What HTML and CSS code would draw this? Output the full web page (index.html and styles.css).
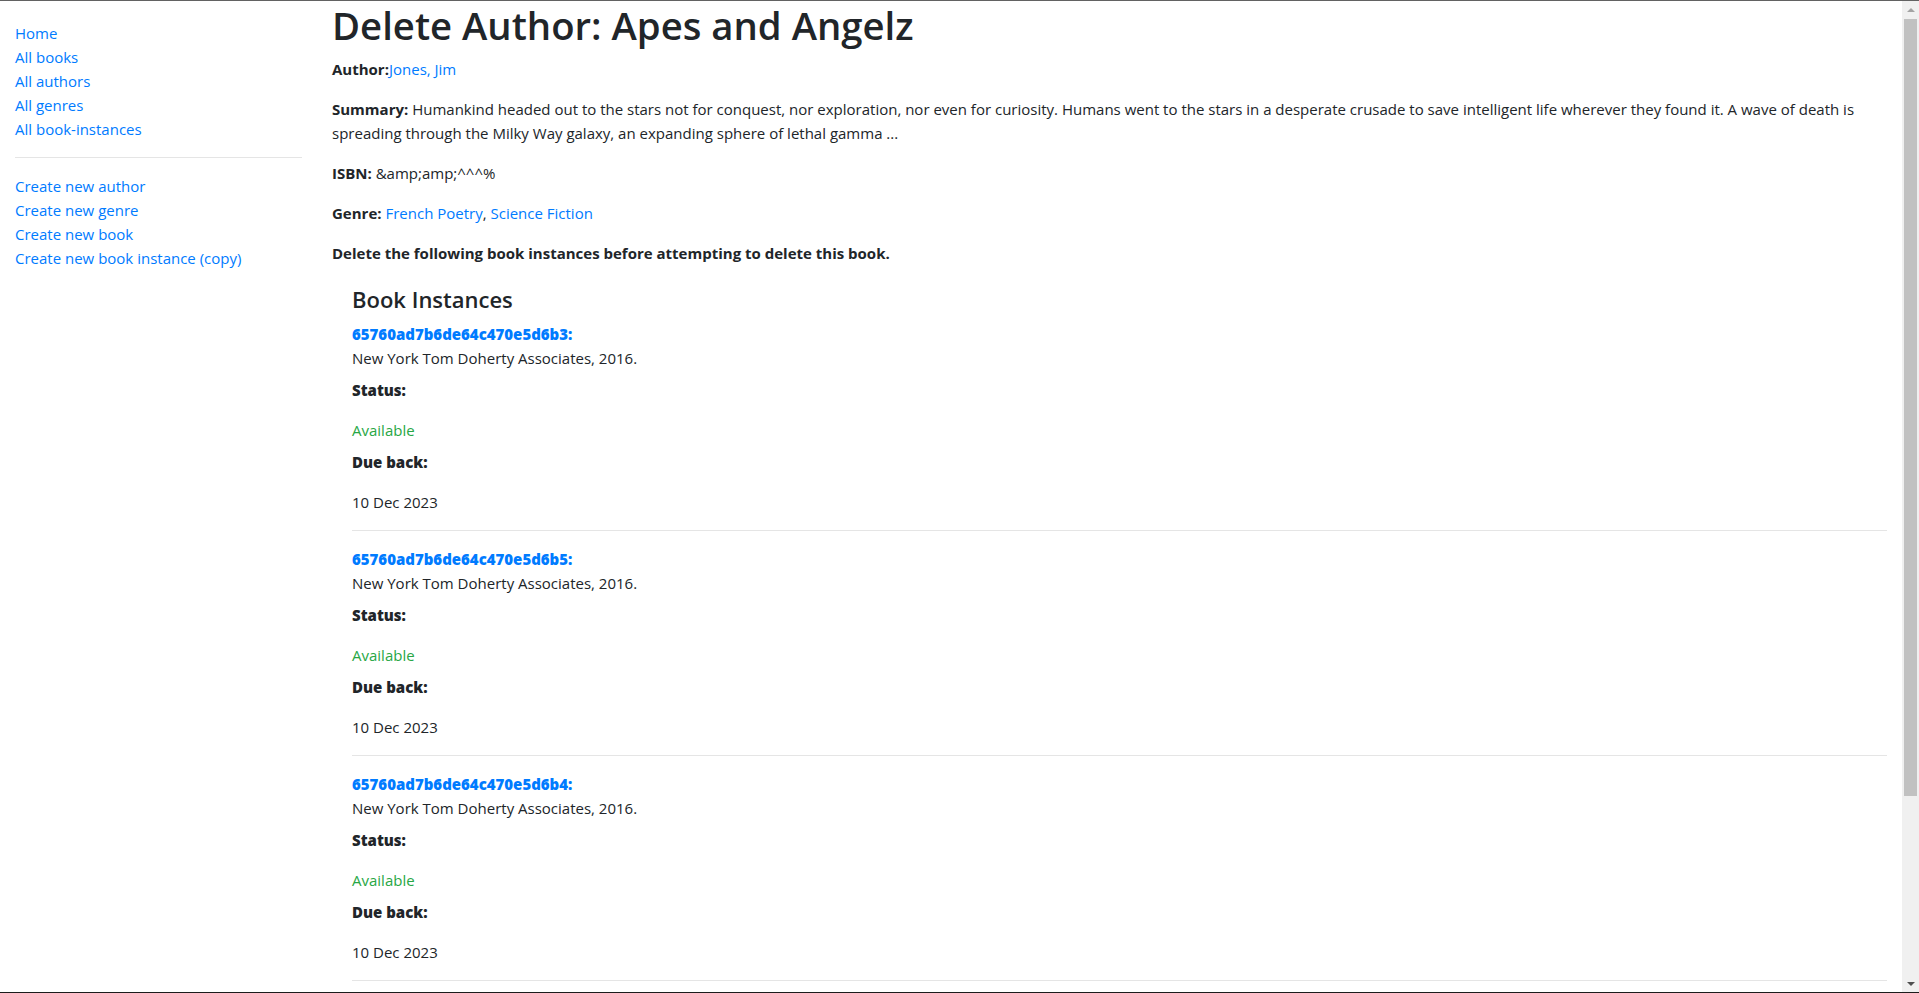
FILE: index.html
```html
<!DOCTYPE html>
<html lang="en">
<head>
<meta charset="utf-8">
<title>Delete Author</title>
<link rel="stylesheet" href="styles.css">
</head>
<body>
<div class="frame">
  <div class="viewport">
    <div class="page">
      <div class="row">
        <aside class="col-side">
          <ul class="sidebar-nav">
            <li><a href="#">Home</a></li>
            <li><a href="#">All books</a></li>
            <li><a href="#">All authors</a></li>
            <li><a href="#">All genres</a></li>
            <li><a href="#">All book-instances</a></li>
            <li><hr class="rule"></li>
            <li><a href="#">Create new author</a></li>
            <li><a href="#">Create new genre</a></li>
            <li><a href="#">Create new book</a></li>
            <li><a href="#">Create new book instance (copy)</a></li>
          </ul>
        </aside>
        <main class="col-main">
          <h1 class="title">Delete Author: Apes and Angelz</h1>
          <p class="para"><strong class="lbl">Author:</strong><a href="#">Jones, Jim</a></p>
          <p class="para"><strong class="lbl">Summary:</strong> Humankind headed out to the stars not for conquest, nor exploration, nor even for curiosity. Humans went to the stars in a desperate crusade to save intelligent life wherever they found it. A wave of death is spreading through the Milky Way galaxy, an expanding sphere of lethal gamma ...</p>
          <p class="para"><strong class="lbl">ISBN:</strong> &amp;amp;amp;^^^%</p>
          <p class="para"><strong class="lbl">Genre:</strong> <a href="#">French Poetry</a>, <a href="#">Science Fiction</a></p>
          <p class="para"><strong class="lbl">Delete the following book instances before attempting to delete this book.</strong></p>

          <section class="instances">
            <h4 class="subtitle">Book Instances</h4>

            <div class="instance">
              <a class="inst-id" href="#">65760ad7b6de64c470e5d6b3:</a>
              <div class="imprint">New York Tom Doherty Associates, 2016.</div>
              <p class="field-label">Status:</p>
              <p class="status">Available</p>
              <p class="field-label">Due back:</p>
              <p class="due">10 Dec 2023</p>
            </div>
            <hr class="rule">

            <div class="instance">
              <a class="inst-id" href="#">65760ad7b6de64c470e5d6b5:</a>
              <div class="imprint">New York Tom Doherty Associates, 2016.</div>
              <p class="field-label">Status:</p>
              <p class="status">Available</p>
              <p class="field-label">Due back:</p>
              <p class="due">10 Dec 2023</p>
            </div>
            <hr class="rule">

            <div class="instance">
              <a class="inst-id" href="#">65760ad7b6de64c470e5d6b4:</a>
              <div class="imprint">New York Tom Doherty Associates, 2016.</div>
              <p class="field-label">Status:</p>
              <p class="status">Available</p>
              <p class="field-label">Due back:</p>
              <p class="due">10 Dec 2023</p>
            </div>
            <hr class="rule">
          </section>
        </main>
      </div>
    </div>
    <div class="scrollbar" aria-hidden="true">
      <div class="sb-btn"><span class="arrow-up"></span></div>
      <div class="sb-track"><div class="sb-thumb"></div></div>
      <div class="sb-btn"><span class="arrow-down"></span></div>
    </div>
  </div>
</div>
</body>
</html>
```
FILE: styles.css
```css
* { box-sizing: border-box; }

html, body {
  margin: 0;
  height: 100%;
  overflow: hidden;
}

body {
  font-family: "Open Sans", "Noto Sans", sans-serif;
  font-size: 15px;
  line-height: 24px;
  color: #212529;
  background: #fff;
}

a {
  color: #007bff;
  text-decoration: none;
}

.frame {
  height: 100%;
  display: flex;
  flex-direction: column;
  border-top: 1px solid #626262;
  border-bottom: 1px solid #1c1c1c;
}

.viewport {
  flex: 1;
  min-height: 0;
  display: flex;
}

.page {
  flex: 1;
  min-width: 0;
  overflow: hidden;
  padding: 0 15px;
}

.row {
  display: flex;
  margin: 0 -15px;
}

.col-side {
  flex: 0 0 16.6667%;
  max-width: 16.6667%;
  padding: 0 15px;
}

.col-main {
  flex: 0 0 83.3333%;
  max-width: 83.3333%;
  padding: 0 15px;
}

.sidebar-nav {
  list-style: none;
  margin: 20px 0 0;
  padding: 0;
}

.rule {
  margin: 16px 0;
  border: 0;
  border-top: 1px solid rgba(0, 0, 0, 0.1);
  height: 0;
}

.title {
  margin: 0 0 8px;
  font-size: 38.3px;
  line-height: 48px;
  font-weight: 600;
}

.para {
  margin: 0 0 16px;
}

.lbl {
  font-weight: 700;
}

.instances {
  margin: 20px 0 0 20px;
}

.subtitle {
  margin: 0 0 8px;
  font-size: 22px;
  line-height: 28.8px;
  font-weight: 600;
}

.instance {
  display: flex;
  flex-direction: column;
  align-items: flex-start;
}

.inst-id {
  font-weight: 800;
}

.imprint {
  margin-bottom: 8px;
}

.instance p {
  margin: 0;
}

.field-label {
  font-weight: 800;
}

.instance .field-label {
  margin-bottom: 16px;
}

.instance .status {
  color: #28a745;
  margin-bottom: 8px;
}

/* fake window scrollbar */
.scrollbar {
  flex: 0 0 17px;
  display: flex;
  flex-direction: column;
  background: #f0f0f0;
}

.sb-btn {
  height: 17px;
  display: flex;
  align-items: center;
  justify-content: center;
}

.arrow-up {
  width: 0;
  height: 0;
  border-left: 4px solid transparent;
  border-right: 4px solid transparent;
  border-bottom: 4px solid #a3a3a3;
}

.arrow-down {
  width: 0;
  height: 0;
  border-left: 4px solid transparent;
  border-right: 4px solid transparent;
  border-top: 4px solid #505050;
}

.sb-track {
  flex: 1;
  padding: 1px 2px 0 2px;
}

.sb-thumb {
  height: 777px;
  background: #c1c1c1;
}
```
